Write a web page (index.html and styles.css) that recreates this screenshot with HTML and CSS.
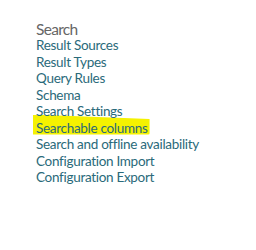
FILE: index.html
```html
<!DOCTYPE html>
<html lang="en">

<head>
    <meta charset="UTF-8">
    <title>Site Settings - Search</title>
    <link rel="stylesheet" href="styles.css">
</head>

<body>
    <div class="settings-group">
        <h3>Search</h3>
        <ul class="settings-links">
            <li><a href="#">Result Sources</a></li>
            <li><a href="#">Result Types</a></li>
            <li><a href="#">Query Rules</a></li>
            <li><a href="#">Schema</a></li>
            <li><a href="#">Search Settings</a></li>
            <li><a href="#" class="marked">Searchable columns</a></li>
            <li><a href="#">Search and offline availability</a></li>
            <li><a href="#">Configuration Import</a></li>
            <li><a href="#">Configuration Export</a></li>
        </ul>
    </div>
</body>

</html>
```

FILE: styles.css
```css
/* Base styles */
body {
    margin: 0;
    background: #fff;
    font-family: Lato, sans-serif;
}

/* Settings group */
.settings-group {
    padding: 21px 0 0 36px;
}

.settings-group h3 {
    margin: 0;
    font-size: 15.5px;
    font-weight: normal;
    line-height: 16px;
    letter-spacing: -0.7px;
    color: #666;
}

.settings-links {
    list-style: none;
    margin: 0;
    padding: 0;
}

.settings-links li {
    font-size: 13.5px;
    line-height: 16.5px;
    letter-spacing: -0.3px;
}

.settings-links a {
    color: #2a6a7a;
    text-decoration: none;
}

/* Marker highlight */
.marked {
    position: relative;
}

.marked::before {
    content: "";
    position: absolute;
    left: -3px;
    right: -2px;
    top: -5px;
    bottom: 1px;
    z-index: -1;
    background: #f5f200;
    border-radius: 0 3px 2px 0;
    clip-path: polygon(0 0, 100% 22%, 100% 100%, 0 100%);
}
```
